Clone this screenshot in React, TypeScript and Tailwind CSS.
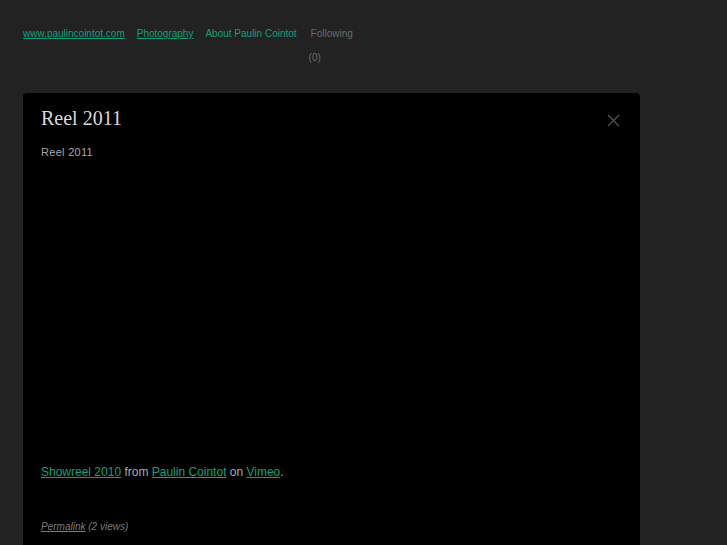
import React from 'react';

const green = 'text-[#10a07a]';

export default function App() {
  return (
    <div className="min-h-[545px] bg-[#222222] font-['Liberation_Sans',Arial,sans-serif] overflow-hidden">
      <nav className="flex items-start pl-[23px] pt-[28px] text-[10px] leading-[12px] gap-[12px]">
        <a className={`${green} underline`} href="#">www.paulincointot.com</a>
        <a className={`${green} underline`} href="#">Photography</a>
        <a className={green} href="#">About Paulin Cointot</a>
        <div className="flex flex-col text-[#6a6a6a] ml-[2px]">
          <span>Following</span>
          <span className="mt-[12px] -ml-[2px]">(0)</span>
        </div>
      </nav>

      <div className="ml-[23px] mt-[29px] w-[617px] h-[460px] bg-black rounded-[4px] relative px-[18px] pt-[11px]">
        <button className="absolute right-[20px] top-[21px] text-[#555]">
          <svg width="13" height="13" viewBox="0 0 13 13" fill="none" stroke="currentColor" strokeWidth="1.3">
            <path d="M1 1 L12 12 M12 1 L1 12" />
          </svg>
        </button>
        <h1 className="font-['Liberation_Serif','Times_New_Roman',serif] text-[20px] leading-[28px] text-[#d8d8d8]">Reel 2011</h1>
        <p className="mt-[13px] text-[11px] leading-[14px] text-[#a8a8a8] tracking-[0.3px]">Reel 2011</p>
        <div className="h-[305px]" />
        <p className="text-[12px] leading-[16px] text-[#aaaaaa]">
          <a className={`${green} underline`} href="#">Showreel 2010</a> from{' '}
          <a className={`${green} underline`} href="#">Paulin Cointot</a> on{' '}
          <a className={`${green} underline`} href="#">Vimeo</a>.
        </p>
        <p className="mt-[41px] text-[10px] leading-[12px] italic text-[#7a7a7a]">
          <a className="underline" href="#">Permalink</a> (2 views)
        </p>
      </div>
    </div>
  );
}
